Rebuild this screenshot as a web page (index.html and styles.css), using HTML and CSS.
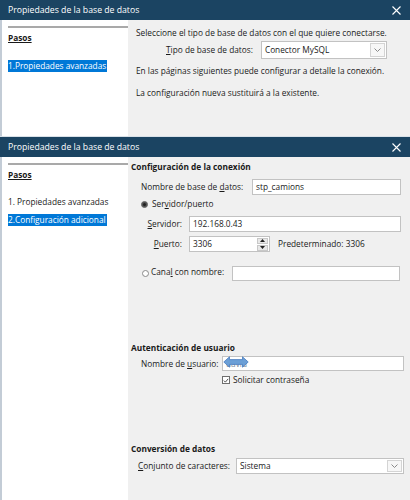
FILE: index.html
```html
<!DOCTYPE html>
<html lang="es">
<head>
<meta charset="utf-8">
<title>Propiedades de la base de datos</title>
<link rel="stylesheet" href="styles.css">
</head>
<body>
<div class="dlg dlg-top">
  <div class="titlebar">
    <span class="title">Propiedades de la base de datos</span>
    <svg class="close" width="9" height="9" viewBox="0 0 9 9"><path d="M0.5 0.5 L8.5 8.5 M8.5 0.5 L0.5 8.5" stroke="#fff" stroke-width="1.1" fill="none"/></svg>
  </div>
  <div class="body">
    <div class="steps">
      <div class="rule"></div>
      <div class="steps-head">Pasos</div>
      <div class="step step-a"><span class="sel">1.Propiedades avanzadas</span></div>
    </div>
    <div class="content content-top">
      <p class="line t1">Seleccione el tipo de base de datos con el que quiere conectarse.</p>
      <div class="type-row">
        <span class="lbl"><u>T</u>ipo de base de datos:</span>
        <div class="select sel-type"><span class="val">Conector MySQL</span><span class="drop"><svg width="7" height="4" viewBox="0 0 7 4"><path d="M0.5 0.5 L3.5 3.5 L6.5 0.5" stroke="#8a8a8a" fill="none" stroke-width="1"/></svg></span></div>
      </div>
      <p class="line t3">En las páginas siguientes puede configurar a detalle la conexión.</p>
      <p class="line t4">La configuración nueva sustituirá a la existente.</p>
    </div>
  </div>
</div>

<div class="dlg dlg-bottom">
  <div class="titlebar">
    <span class="title">Propiedades de la base de datos</span>
    <svg class="close" width="9" height="9" viewBox="0 0 9 9"><path d="M0.5 0.5 L8.5 8.5 M8.5 0.5 L0.5 8.5" stroke="#fff" stroke-width="1.1" fill="none"/></svg>
  </div>
  <div class="body">
    <div class="steps">
      <div class="rule"></div>
      <div class="steps-head">Pasos</div>
      <div class="step step-1">1. Propiedades avanzadas</div>
      <div class="step step-2"><span class="sel">2.Configuración adicional</span></div>
    </div>
    <div class="content content-bottom">
      <div class="head h-conn">Configuración de la conexión</div>
      <div class="row r-dbname">
        <span class="lbl lbl-dbname">Nombre de base de <u>d</u>atos:</span>
        <div class="field f-dbname">stp_camions</div>
      </div>
      <div class="row r-radio1">
        <span class="radio on"></span><span>Ser<u>v</u>idor/puerto</span>
      </div>
      <div class="row r-server">
        <span class="lbl lbl-col"><u>S</u>ervidor:</span>
        <div class="field f-server">192.168.0.43</div>
      </div>
      <div class="row r-port">
        <span class="lbl lbl-col"><u>P</u>uerto:</span>
        <div class="field f-port"><span class="val">3306</span>
          <span class="spin"><span class="spin-btn"><svg width="5" height="3" viewBox="0 0 5 3"><path d="M0 3 L2.5 0 L5 3Z" fill="#222"/></svg></span><span class="spin-btn"><svg width="5" height="3" viewBox="0 0 5 3"><path d="M0 0 L2.5 3 L5 0Z" fill="#222"/></svg></span></span>
        </div>
        <span class="default">Predeterminado: 3306</span>
      </div>
      <div class="row r-pipe">
        <span class="radio"></span><span class="lbl-pipe">Cana<u>l</u> con nombre:</span>
        <div class="field f-pipe"></div>
      </div>

      <div class="head h-auth">Autenticación de usuario</div>
      <div class="row r-user">
        <span class="lbl lbl-user">Nombre de <u>u</u>suario:</span>
        <div class="field f-user"><span class="val user-val">david</span>
          <svg class="arrow" width="26" height="12" viewBox="0 0 26 12"><path d="M0.8 6 L6.5 0.8 L6.5 3.6 L19.5 3.6 L19.5 0.8 L25.2 6 L19.5 11.2 L19.5 8.4 L6.5 8.4 L6.5 11.2 Z" fill="#6b9fd6" stroke="#4a7cbf" stroke-width="0.8" stroke-linejoin="round"/></svg>
        </div>
      </div>
      <div class="row r-check">
        <span class="check"><svg width="7" height="7" viewBox="0 0 7 7"><path d="M1 3.6 L2.8 5.4 L6 1.6" stroke="#333" stroke-width="1" fill="none"/></svg></span><span>Solicitar contraseña</span>
      </div>

      <div class="head h-conv">Conversión de datos</div>
      <div class="row r-charset">
        <span class="lbl lbl-charset"><u>C</u>onjunto de caracteres:</span>
        <div class="select sel-charset"><span class="val">Sistema</span><span class="drop"><svg width="7" height="4" viewBox="0 0 7 4"><path d="M0.5 0.5 L3.5 3.5 L6.5 0.5" stroke="#8a8a8a" fill="none" stroke-width="1"/></svg></span></div>
      </div>
    </div>
  </div>
</div>
</body>
</html>
```

FILE: styles.css
```css
* { box-sizing: border-box; }
html, body {
  margin: 0;
  padding: 0;
  width: 410px;
  height: 500px;
  overflow: hidden;
  background: #f0f0f0;
}
body {
  font-family: "Open Sans", "Noto Sans", sans-serif;
  font-size: 8.3px;
  line-height: 12px;
  color: #1a1a1a;
}
p { margin: 0; }
u { text-decoration: underline; text-underline-offset: 1px; }

.dlg { display: flex; flex-direction: column; }
.dlg-top { height: 136px; }
.dlg-bottom { height: 364px; border-top: 1px solid #d9e1e8; }

.titlebar {
  height: 20px;
  flex: none;
  background: #1b4462;
  color: #fff;
  display: flex;
  align-items: center;
  justify-content: space-between;
  padding: 0 9px 0 8px;
}
.title { font-size: 8.7px; letter-spacing: 0; }
.close { display: block; }

.body { flex: 1; display: flex; min-height: 0; }

.steps {
  width: 128px;
  flex: none;
  background: #fff;
  border-left: 2px solid #c3ccd6;
  padding: 6px 0 0 6px;
}
.rule { height: 2px; background: #a9a9a9; }
.steps-head {
  margin-top: 4px;
  font-weight: 700;
  text-decoration: underline;
  text-underline-offset: 1px;
}
.step-a { margin-top: 16px; }
.step-1 { margin-top: 15px; }
.step-2 { margin-top: 6px; }
.sel {
  display: inline-block;
  background: #0078d7;
  color: #fff;
  padding: 0 1px 0 0;
}

.content { flex: 1; }
.content-top { padding: 7px 0 0 8px; }
.line.t3 { margin-top: 6px; }
.line.t4 { margin-top: 10px; }
.type-row {
  margin-top: 2px;
  padding-left: 30px;
  display: flex;
  align-items: center;
  gap: 8px;
}

.select, .field {
  background: #fff;
  border: 1px solid #c2c2c2;
  display: flex;
  align-items: center;
  height: 16px;
  padding-left: 3px;
  position: relative;
}
.select { justify-content: space-between; padding-right: 0; }
.sel-type { width: 126px; height: 18px; }
.drop {
  width: 15px;
  height: calc(100% - 2px);
  margin-right: 1px;
  border: 1px solid #d4d4d4;
  background: #f7f7f7;
  display: flex;
  align-items: center;
  justify-content: center;
}

.content-bottom { padding: 4px 0 0 3px; }
.head { font-weight: 700; }
.row { display: flex; align-items: center; }
.r-dbname { margin-top: 6px; padding-left: 10px; }
.lbl-dbname { width: 111px; }
.f-dbname { width: 149px; }
.r-radio1 { margin-top: 3px; padding-left: 10px; gap: 2px; }
.r-server { margin-top: 6px; padding-left: 10px; }
.r-port { margin-top: 4px; padding-left: 10px; }
.lbl-col { width: 41px; text-align: right; margin-right: 7px; }
.f-server { width: 212px; }
.f-port { width: 81px; justify-content: space-between; padding-right: 1px; }
.spin { display: flex; flex-direction: column; width: 11px; height: 13px; gap: 1px; }
.spin-btn {
  flex: 1;
  background: #e8e8e8;
  border: 1px solid #c8c8c8;
  display: flex;
  align-items: center;
  justify-content: center;
}
.spin-btn svg { display: block; }
.default { margin-left: 8px; }
.r-pipe { margin-top: 14px; padding-left: 11px; }
.radio {
  width: 7px;
  height: 7px;
  border-radius: 50%;
  border: 1px solid #8a8a8a;
  background: #fff;
  flex: none;
  margin-right: 2px;
}
.radio.on {
  background: #222;
  border-color: #777;
  box-shadow: inset 0 0 0 1px #555;
}
.lbl-pipe { width: 81px; margin-top: -3px; }
.f-pipe { width: 168px; height: 15px; }

.h-auth { margin-top: 61px; }
.r-user { margin-top: 2px; padding-left: 10px; }
.lbl-user { width: 81px; }
.f-user { width: 182px; height: 15px; }
.user-val { color: #7a8a99; }
.arrow { position: absolute; left: 0; top: -1px; }
.r-check { margin-top: 3px; padding-left: 91px; gap: 3px; }
.check {
  width: 8px;
  height: 8px;
  border: 1px solid #6e6e6e;
  background: #fff;
  display: flex;
  align-items: center;
  justify-content: center;
}
.check svg { display: block; }

.h-conv { margin-top: 57px; }
.r-charset { margin-top: 3px; padding-left: 7px; }
.lbl-charset { width: 98px; }
.sel-charset { width: 168px; }
```
